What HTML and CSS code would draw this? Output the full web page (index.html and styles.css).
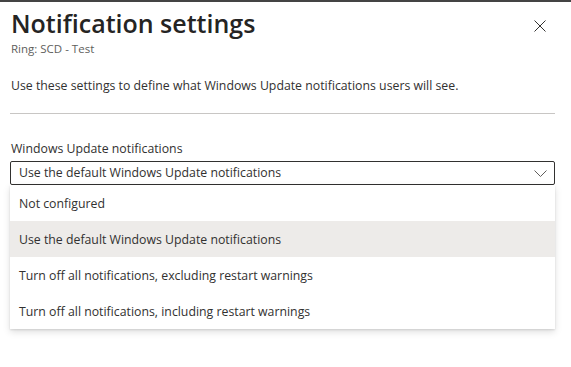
FILE: index.html
```html
<!DOCTYPE html>
<html lang="en">
<head>
<meta charset="utf-8">
<title>Notification settings</title>
<link rel="stylesheet" href="styles.css">
</head>
<body>
<div class="topbar"></div>
<div class="panel">
  <div class="header">
    <div class="titles">
      <h1 class="title">Notification settings</h1>
      <div class="subtitle">Ring: SCD - Test</div>
    </div>
    <button class="close" aria-label="Close">
      <svg width="12" height="12" viewBox="0 0 12 12"><path d="M0.5 0.5 L11.5 11.5 M11.5 0.5 L0.5 11.5" stroke="#323130" stroke-width="1" fill="none"/></svg>
    </button>
  </div>
  <p class="desc">Use these settings to define what Windows Update notifications users will see.</p>
  <div class="divider"></div>
  <div class="field">
    <label class="label">Windows Update notifications</label>
    <div class="dropdown">
      <div class="select">
        <span class="select-text">Use the default Windows Update notifications</span>
        <svg class="chevron" width="13" height="7" viewBox="0 0 13 7"><path d="M0.5 0.5 L6.5 6.5 L12.5 0.5" stroke="#605e5c" stroke-width="1" fill="none"/></svg>
      </div>
      <ul class="menu">
        <li class="option">Not configured</li>
        <li class="option selected">Use the default Windows Update notifications</li>
        <li class="option">Turn off all notifications, excluding restart warnings</li>
        <li class="option">Turn off all notifications, including restart warnings</li>
      </ul>
    </div>
  </div>
</div>
</body>
</html>
```
FILE: styles.css
```css
* { box-sizing: border-box; }
html, body { margin: 0; padding: 0; background: #ffffff; }
body {
  font-family: "Open Sans", "Noto Sans", "Liberation Sans", sans-serif;
  color: #323130;
  width: 571px;
  height: 367px;
  overflow: hidden;
}
.topbar { height: 2px; background: #444444; }
.panel { padding: 0 16px 0 10px; }
.header { display: flex; justify-content: space-between; align-items: flex-start; }
.titles { padding-left: 1px; }
.title {
  margin: 5px 0 0 0;
  font-size: 25px;
  line-height: 32px;
  font-weight: 600;
  color: #252423;
}
.subtitle {
  margin-top: 2px;
  font-size: 11.5px;
  line-height: 16px;
  color: #605e5c;
}
.close {
  border: none;
  background: transparent;
  padding: 0;
  margin: 18px 9px 0 0;
  width: 12px;
  height: 12px;
  display: flex;
}
.desc {
  margin: 20px 0 0 1px;
  font-size: 12.3px;
  line-height: 18px;
}
.divider { margin-top: 18px; height: 1px; background: #c8c6c4; }
.field { margin-top: 26px; display: flex; flex-direction: column; }
.label {
  padding-left: 1px;
  font-size: 12.3px;
  line-height: 18px;
}
.dropdown { position: relative; margin-top: 3px; }
.select {
  height: 24px;
  border: 1px solid #323130;
  border-radius: 2px;
  display: flex;
  align-items: center;
  justify-content: space-between;
  padding: 0 7px 0 8px;
}
.select-text { font-size: 12.3px; line-height: 22px; }
.chevron { display: block; }
.menu {
  position: absolute;
  left: 0;
  right: 0;
  top: 24px;
  margin: 0;
  padding: 0;
  list-style: none;
  background: #ffffff;
  box-shadow: 0 3.2px 7.2px rgba(0,0,0,0.13), 0 0.6px 1.8px rgba(0,0,0,0.11);
}
.option {
  height: 36px;
  display: flex;
  align-items: center;
  padding-left: 9px;
  font-size: 12.3px;
}
.option.selected { background: #edebe9; }
```
